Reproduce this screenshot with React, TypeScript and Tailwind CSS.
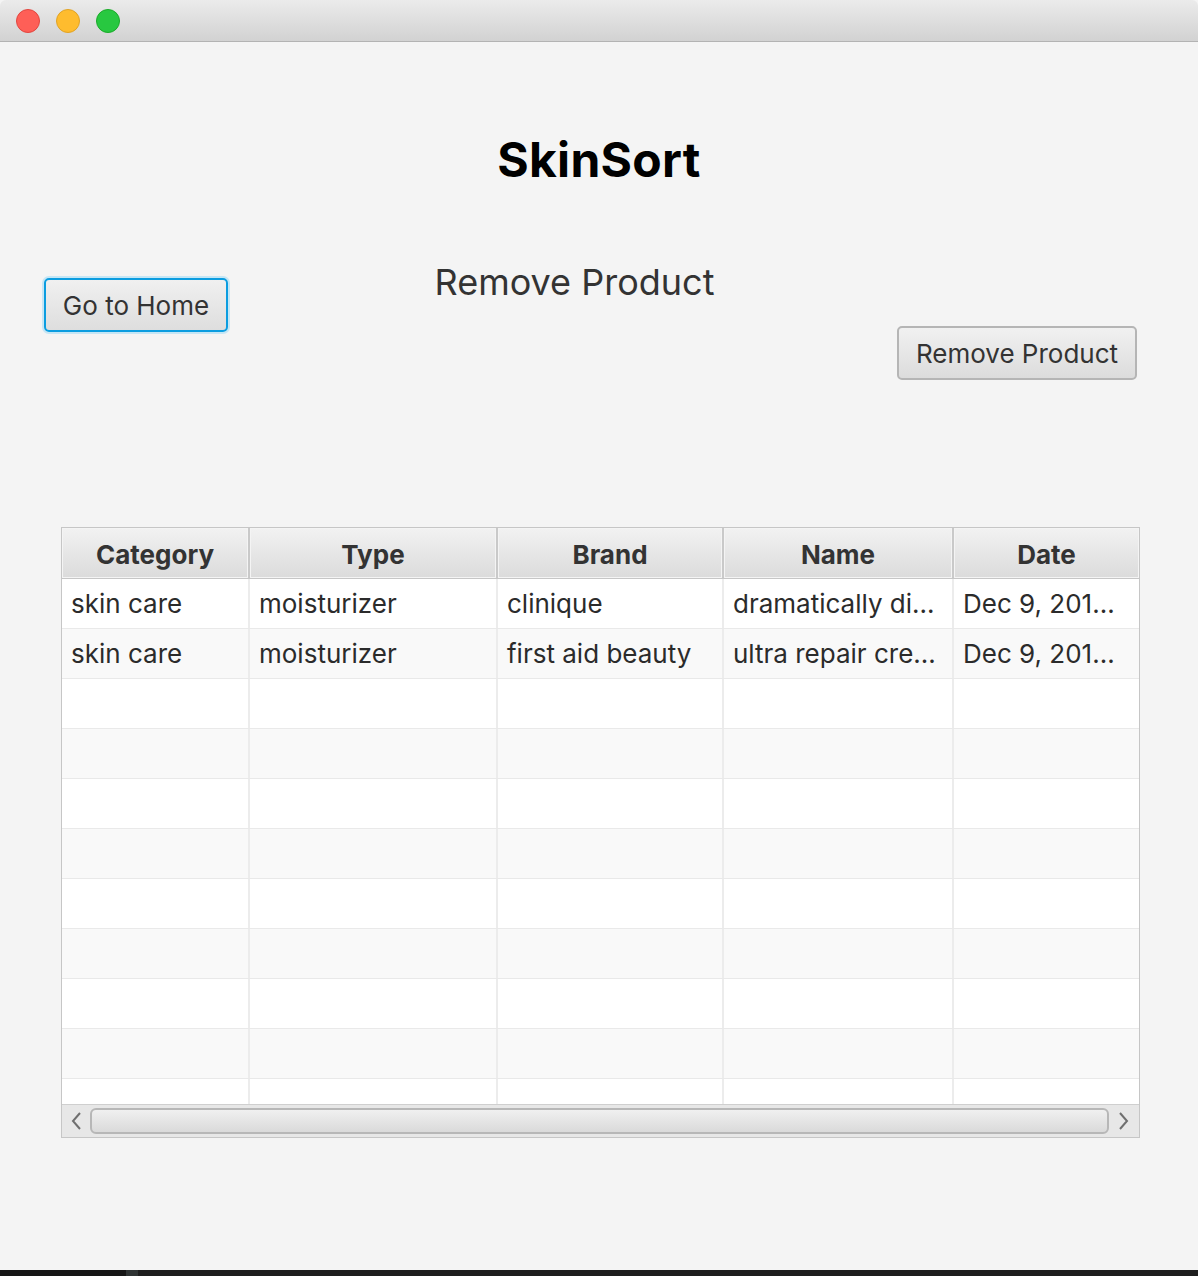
import React from 'react';

const columns = [
  { label: 'Category', width: 'w-[188px]' },
  { label: 'Type', width: 'w-[248px]' },
  { label: 'Brand', width: 'w-[226px]' },
  { label: 'Name', width: 'w-[230px]' },
  { label: 'Date', width: 'flex-1' },
];

const products = [
  ['skin care', 'moisturizer', 'clinique', 'dramatically di...', 'Dec 9, 201...'],
  ['skin care', 'moisturizer', 'first aid beauty', 'ultra repair cre...', 'Dec 9, 201...'],
];

const EMPTY_ROWS = 9;

const App: React.FC = () => {
  const rows = [...products, ...Array.from({ length: EMPTY_ROWS }, () => ['', '', '', '', ''])];

  return (
    <div
      className="w-[1198px] h-[1276px] flex flex-col bg-[#f4f4f4] overflow-hidden text-[#333]"
      style={{ fontFamily: 'Inter, "Noto Sans", sans-serif' }}
    >
      {/* Window title bar */}
      <div className="h-[42px] shrink-0 flex items-center gap-[16px] pl-[16px] bg-gradient-to-b from-[#ebebeb] to-[#d2d2d2] border-b border-[#b3b3b3] rounded-t-[6px]">
        <span className="w-[24px] h-[24px] rounded-full bg-[#fe5f57] border border-[#e2463f]" />
        <span className="w-[24px] h-[24px] rounded-full bg-[#febc2e] border border-[#e1a325]" />
        <span className="w-[24px] h-[24px] rounded-full bg-[#28c840] border border-[#1aab29]" />
      </div>

      {/* Main content */}
      <main className="flex-1 flex flex-col">
        <h1 className="mt-[90px] text-center text-[48px] leading-[56px] font-bold text-black tracking-[0.3px]">
          SkinSort
        </h1>

        <div className="mt-[74px] flex items-start">
          <div className="ml-[44px] mt-[16px] w-[184px]">
            <button className="w-[184px] h-[54px] rounded-[5px] border-[2px] border-[#0b9de0] shadow-[0_0_0_2px_#c5e6f5] bg-gradient-to-b from-[#f0f0f0] to-[#dedede] text-[26px] text-[#333]">
              Go to Home
            </button>
          </div>
          <div className="w-[669px] pl-[24px] text-center text-[36px] leading-[40px] text-[#333]">
            Remove Product
          </div>
          <div className="mt-[64px] w-[240px]">
            <button className="w-[240px] h-[54px] rounded-[5px] border-[2px] border-[#b5b5b5] bg-gradient-to-b from-[#f1f1f1] to-[#dcdcdc] text-[26px] text-[#333]">
              Remove Product
            </button>
          </div>
        </div>

        {/* Table */}
        <div className="mt-[147px] ml-[61px] w-[1079px] h-[611px] border border-[#c6c6c6] flex flex-col bg-white">
          <div className="h-[51px] shrink-0 flex border-b border-[#c6c6c6]">
            {columns.map((col, i) => (
              <div
                key={col.label}
                className={`${col.width} ${i < columns.length - 1 ? 'border-r-[2px] border-[#c9c9c9]' : ''} flex items-center justify-center pt-[2px] bg-gradient-to-b from-[#f2f2f2] to-[#dbdbdb] shadow-[inset_0_0_0_1px_#f4f4f4] text-[26px] font-bold text-[#333]`}
              >
                {col.label}
              </div>
            ))}
          </div>

          <div className="flex-1 overflow-hidden">
            {rows.map((row, r) => (
              <div
                key={r}
                className={`h-[50px] flex border-b border-[#e9e9e9] ${r % 2 === 1 ? 'bg-[#f9f9f9]' : 'bg-white'}`}
              >
                {row.map((cell, c) => (
                  <div
                    key={c}
                    className={`${columns[c].width} ${c < columns.length - 1 ? 'border-r-[2px] border-[#ececec]' : ''} flex items-center px-[9px] text-[26px] text-[#2b2b2b] whitespace-nowrap overflow-hidden`}
                  >
                    {cell}
                  </div>
                ))}
              </div>
            ))}
          </div>

          {/* Horizontal scrollbar */}
          <div className="h-[33px] shrink-0 flex items-center bg-[#e7e7e7] border-t border-[#cfcfcf]">
            <div className="w-[28px] flex justify-center">
              <svg width="12" height="20" viewBox="0 0 12 20" fill="none">
                <path d="M10 2L3 10l7 8" stroke="#6f6f6f" strokeWidth="2" />
              </svg>
            </div>
            <div className="flex-1 h-[26px] rounded-[6px] border-[2px] border-[#b7b7b7] bg-gradient-to-b from-[#f0f0f0] to-[#dadada]" />
            <div className="w-[30px] flex justify-center">
              <svg width="12" height="20" viewBox="0 0 12 20" fill="none">
                <path d="M2 2l7 8-7 8" stroke="#6f6f6f" strokeWidth="2" />
              </svg>
            </div>
          </div>
        </div>
      </main>

      {/* Bottom dock strip */}
      <div className="h-[6px] shrink-0 flex bg-[#1e1e1e]">
        <div className="w-[126px] bg-[#161616]" />
        <div className="w-[12px] bg-[#2f3333]" />
      </div>
    </div>
  );
};

export default App;
